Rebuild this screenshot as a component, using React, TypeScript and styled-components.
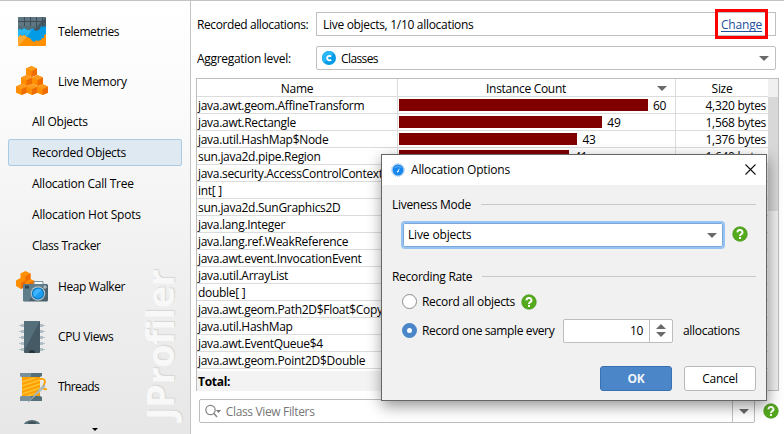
import React from "react";
import styled, { createGlobalStyle, css } from "styled-components";

const Global = createGlobalStyle`
  * { box-sizing: border-box; }
  html, body { margin: 0; padding: 0; background: #fff; }
  body { font-family: "Open Sans", "Noto Sans", sans-serif; font-size: 12px; line-height: 16px; color: #000; letter-spacing: -0.3px; overflow: hidden; }
`;

const Window = styled.div`
  position: relative;
  display: flex;
  width: 784px;
  height: 434px;
  border-top: 1px solid #c3c3c3;
  overflow: hidden;
  white-space: nowrap;
`;

const Label = styled.span<{ $w?: number; $ls?: number }>`
  flex: none;
  padding-top: 2px;
  ${(p) => p.$w && css`width: ${p.$w}px;`}
  ${(p) => p.$ls !== undefined && css`letter-spacing: ${p.$ls}px;`}
`;

/* ---------- sidebar ---------- */
const Sidebar = styled.nav`
  position: relative;
  flex: none;
  width: 191px;
  height: 433px;
  padding-top: 6px;
  border-right: 1px solid #c3c3c3;
  background: linear-gradient(#ffffff 0%, #fbfbfb 24%, #f0f0f0 62%, #e7e7e7 100%);
`;
const NavScroll = styled.div`
  height: 417px;
  overflow: hidden;
`;
const NavItem = styled.div`
  display: flex;
  align-items: center;
  height: 50px;
  padding-left: 16px;
  svg { flex: none; margin-right: 10px; }
  ${Label} { padding-top: 0; }
`;
const SubItem = styled.div<{ $selected?: boolean }>`
  display: flex;
  align-items: center;
  height: 27px;
  margin: 0 8px 4px;
  padding-left: 23px;
  border: 1px solid transparent;
  border-radius: 2px;
  ${Label} { padding-top: 1px; }
  ${(p) => p.$selected && css`background: #dfe9f2; border-color: #a9cbe3;`}
`;
const SubList = styled.div`
  padding-top: 1px;
  height: 155px;
`;
const MoreArrow = styled.div`
  position: absolute;
  left: 92px;
  top: 427px;
  border: 3px solid transparent;
  border-top-color: #000;
  border-bottom: 0;
`;
const Watermark = styled.div`
  position: absolute;
  left: 138px;
  top: 267px;
  height: 152px;
  writing-mode: vertical-rl;
  transform: rotate(180deg);
  font: bold 38px/42px "Open Sans", sans-serif;
  letter-spacing: -0.5px;
  color: #f8f8f8;
  text-shadow: 1px 1px 1px #d6d6d6;
`;

/* ---------- main pane ---------- */
const Main = styled.main`
  flex: 1;
  display: flex;
  flex-direction: column;
  padding: 11px 5px 0 5px;
  min-width: 0;
`;
const FormRow = styled.div`
  display: flex;
  align-items: center;
  height: 24px;
  margin-bottom: 10px;
  padding-left: 1px;
`;
const Field = styled.div<{ $round?: boolean }>`
  display: flex;
  align-items: center;
  width: 460px;
  height: 24px;
  padding: 0 ${(p) => (p.$round ? 6 : 13)}px 0 ${(p) => (p.$round ? 5 : 6)}px;
  border: 1px solid #c0c0c0;
  border-radius: ${(p) => (p.$round ? 2 : 0)}px;
  background: #fff;
  svg { margin-right: 5px; }
`;
const Push = styled.span`
  flex: 1;
`;
const Link = styled.a`
  color: #1d4f9c;
  padding-top: 2px;
  line-height: 13px;
  letter-spacing: -0.2px;
  border-bottom: 1px solid #1d4f9c;
`;
const Caret = styled.i<{ $up?: boolean; $size?: number; $h?: number }>`
  display: block;
  flex: none;
  border: ${(p) => p.$size ?? 5}px solid transparent;
  ${(p) => (p.$up
    ? css`border-top: 0; border-bottom: ${p.$h ?? 5}px solid #6a6a6a;`
    : css`border-bottom: 0; border-top: ${p.$h ?? 5}px solid #6a6a6a;`)}
`;
const Highlight = styled.div`
  position: absolute;
  left: 715px;
  top: 8px;
  width: 53px;
  height: 30px;
  border: 3px solid #f00;
`;

/* ---------- table ---------- */
const Table = styled.div`
  display: flex;
  width: 583px;
  height: 313px;
  margin-top: -2px;
  border: 1px solid #bdbdbd;
`;
const Rows = styled.div`
  width: 571px;
`;
const Row = styled.div<{ $head?: boolean }>`
  display: grid;
  grid-template-columns: 200px 278px 93px;
  height: ${(p) => (p.$head ? 18 : 17)}px;
  border-bottom: 1px solid #dcdcdc;
`;
const Cell = styled.div<{ $align?: string }>`
  display: flex;
  align-items: center;
  justify-content: ${(p) => p.$align ?? "flex-start"};
  padding: 1px ${(p) => (p.$align ? 2 : 0)}px 0 1px;
  line-height: 15px;
  overflow: hidden;
  & + & { border-left: 1px solid #dcdcdc; }
`;
const HeadCell = styled(Cell)<{ $sorted?: boolean }>`
  justify-content: center;
  position: relative;
  padding: 2px ${(p) => (p.$sorted ? 22 : 1)}px 0 1px;
`;
const SortMark = styled.span`
  position: absolute;
  right: 8px;
  top: 7px;
`;
const Bar = styled.div`
  height: 12px;
  margin: 0 5px 1px 0;
  background: #800000;
`;
const TotalRow = styled.div`
  margin-top: 2px;
  height: 20px;
  padding: 3px 1px;
  background: #f3f3f3;
  font-weight: bold;
`;
const ScrollTrack = styled.div`
  width: 10px;
  padding-top: 18px;
  background: #f0f0f0;
`;
const ScrollThumb = styled.div`
  height: 114px;
  background: #d8d8d8;
`;

/* ---------- filter ---------- */
const FilterRow = styled.div`
  display: flex;
  align-items: center;
  margin-top: 8px;
  padding-left: 3px;
`;
const FilterBox = styled.div`
  display: flex;
  align-items: center;
  width: 557px;
  height: 24px;
  margin-right: 8px;
  padding-left: 5px;
  border: 1px solid #bdbdbd;
  border-radius: 2px;
  color: #777;
`;
const SplitButton = styled.div<{ $w: number }>`
  display: flex;
  flex-direction: column;
  align-items: center;
  justify-content: center;
  gap: 3px;
  align-self: stretch;
  width: ${(p) => p.$w}px;
  border-left: 1px solid #c0c0c0;
`;

/* ---------- dialog ---------- */
const Dialog = styled.section`
  position: absolute;
  left: 381px;
  top: 153px;
  width: 386px;
  height: 247px;
  border: 1px solid #666;
  background: #f1f1f1;
  box-shadow: 1px 5px 14px rgba(0, 0, 0, 0.42);
  ${Label} { padding-top: 0; }
`;
const TitleBar = styled.header`
  display: flex;
  align-items: center;
  height: 30px;
  padding: 0 10px 0 9px;
  background: #fff;
  svg { margin: 0 6px 1px 0; }
  svg:last-child { margin-right: 0; }
`;
const Body = styled.div`
  padding: 11px 10px 0 10px;
`;
const GroupTitle = styled.div`
  display: flex;
  align-items: center;
  gap: 10px;
  height: 17px;
  &::after { content: ""; flex: 1; height: 1px; margin-bottom: 1px; background: #c8c8c8; }
`;
const ModeRow = styled.div`
  display: flex;
  align-items: center;
  gap: 7px;
  margin: 8px 0 19px 9px;
  svg { margin-bottom: 2px; }
`;
const Combo = styled.div`
  display: flex;
  align-items: center;
  width: 324px;
  height: 28px;
  padding: 0 6px 0 5px;
  border: 2px solid #97c3f3;
  border-radius: 4px;
  background: #fff;
  box-shadow: inset 0 0 0 1px #7ba8dc;
`;
const OptionRow = styled.div<{ $h: number }>`
  display: flex;
  align-items: center;
  height: ${(p) => p.$h}px;
  padding-left: 10px;
`;
const Radio = styled.span<{ $on?: boolean }>`
  flex: none;
  width: 15px;
  height: 15px;
  margin-right: 5px;
  border-radius: 50%;
  ${(p) => (p.$on
    ? css`border: 5px solid #4a86c8;`
    : css`border: 1px solid #8c8c8c;`)}
  background: #fff;
`;
const Spinner = styled.div`
  display: flex;
  align-items: center;
  justify-content: flex-end;
  width: 110px;
  height: 24px;
  margin-right: 10px;
  border: 1px solid #bdbdbd;
  border-radius: 2px;
  background: #fff;
`;
const Num = styled.span`
  margin-right: 6px;
`;
const Buttons = styled.div`
  display: flex;
  justify-content: flex-end;
  gap: 12px;
  margin-top: 23px;
`;
const Button = styled.button<{ $primary?: boolean }>`
  width: 72px;
  height: 25px;
  padding: 0;
  font: inherit;
  letter-spacing: inherit;
  border-radius: 3px;
  border: 1px solid #b8b8b8;
  background: #fff;
  color: #000;
  ${(p) => p.$primary && css`border-color: #3a71b3; background: #4a86c8; color: #f0f4fa; font-weight: bold;`}
`;

/* ---------- icons ---------- */
const Help = () => (
  <svg width="16" height="16" viewBox="0 0 16 16">
    <circle cx="8" cy="8" r="7.3" fill="#54a91c" stroke="#3f9211" strokeWidth=".6" />
    <path d="M5.500 6.400a2.500 2.200 0 1 1 3.700 1.700C8.400 8.600 8 8.900 8 9.900" fill="none" stroke="#fff" strokeWidth="1.900" />
    <rect x="7" y="10.900" width="2" height="2" fill="#fff" />
  </svg>
);

const TelemetryIcon = () => (
  <svg width="32" height="32" viewBox="0 0 32 32">
    <rect x="2" y="1" width="28" height="29" rx="1" fill="#ff9100" />
    <path d="M2 30 17 15 2 13z" fill="#ffab33" />
    <path d="M2 2q0-1 1-1h26q1 0 1 1v9H2z" fill="#455a64" />
    <path d="M2 2q0-1 1-1h27L20 11H2z" fill="#607781" />
    <path d="M8.500 1v10M14.500 1v10M20.500 1v10M26.500 1v10M2 5.500h28" stroke="#3c4e57" />
    <path d="M2 10h28v5l-4 4H4l-2-3z" fill="#455a64" />
    <path d="M2 10h19l-6 7H2z" fill="#546e7a" />
    <path d="M2 14l2-1 2 1 2-2 3 2 3 0 3-2 1 2 3 1 3-2 1-3 2 1 3-1v8l-2 1v3l-2 0-1 2-3 1-2-1-1 2-3-1-2-3-3-1-3-3-2 2-2-2-2 3z" fill="#039be5" />
    <path d="M2 14l2-1 2 1 2-2 3 2 3 0 3-2-6 9-2-3-2 2-2-2-3 3z" fill="#29b6f6" />
  </svg>
);

const Cube = ({ x, y }: { x: number; y: number }) => (
  <g transform={`translate(${x} ${y})`}>
    <path d="M5.500 0 11 2.600v6.100L5.500 11 0 8.700V2.600z" fill="#ff8f00" />
    <path d="M5.500 4.900 11 2.600v6.100L5.500 11z" fill="#ef6c00" />
    <path d="M0 2.600 5.500 0 11 2.600 5.500 4.900z" fill="#ff9a1c" />
  </g>
);

const CubesIcon = () => (
  <svg width="32" height="32" viewBox="0 0 32 32">
    <Cube x={10} y={0} />
    <Cube x={5} y={9} /><Cube x={16} y={9} />
    <Cube x={0} y={18} /><Cube x={10.5} y={18} /><Cube x={21} y={18} />
  </svg>
);

const HeapIcon = () => (
  <svg width="32" height="32" viewBox="0 0 32 32">
    <path d="m9.500 0 5 2.500v5.500l4 2v5H10l-5 3-5-3v-5.500l4.500-2.500V2.500z" fill="#ff8f00" />
    <path d="m9.500 5 5-2.500v5.500L9.500 11zM5 12l4.500-2.500v6L5 18zM13 11.500l5.500-2v4H13z" fill="#ef6c00" />
    <path d="M18 14v-3.500h9V14" fill="#f5f7f8" stroke="#78909c" />
    <rect x="7" y="13" width="25" height="17.500" rx="1.500" fill="#4b626d" />
    <path d="M7 15q0-2 2-2h20L12 30H7z" fill="#607d8b" />
    <rect x="9" y="14.500" width="4" height="3" fill="#37474f" />
    <path d="M27 16h4M29 14v4" stroke="#cfd8dc" />
    <circle cx="22" cy="22.500" r="7.300" fill="#b0bec5" />
    <circle cx="22" cy="22.500" r="6.100" fill="#0277bd" />
    <circle cx="22" cy="22.500" r="5" fill="#1e9cf0" />
    <path d="M18.500 26A5 5 0 0 1 25.500 19z" fill="#40b4ff" />
  </svg>
);

const CpuIcon = () => (
  <svg width="32" height="32" viewBox="0 0 32 32">
    {[3, 9, 15, 21, 27].map((y) => (
      <path key={y} d={`M3 ${y + 1}h2v-1h3v3h-3v-1h-2zM29 ${y + 1}h-2v-1h-3v3h3v-1h2z`} fill="#b0bec5" />
    ))}
    <rect x="8" y="0" width="16" height="32" rx="1" fill="#455a64" />
    <path d="M9 0h15L8 30V1q0-1 1-1z" fill="#546e7a" />
    <path d="M13 32a3 3 0 0 1 6 0z" fill="#263238" />
  </svg>
);

const ThreadsIcon = () => (
  <svg width="32" height="32" viewBox="0 0 32 32">
    <rect x="6" y="5" width="18" height="21" fill="#ffa000" />
    <path d="M6 11 19 7M6 15 24 9M6 19 24 13M6 23 24 17M8 26 24 21" stroke="#ffc233" strokeWidth="1.500" />
    <path d="M4 2h22v3l-2 1H6L4 5zM4 26l2-1h18l2 1v4H4z" fill="#546e7a" />
    <path d="M4 2h11v4H6L4 5zM4 26l2-1h9v5H4z" fill="#78909c" />
    <path d="M24 8q5-1 5 3l-2 5q0 3 4 2" fill="none" stroke="#ffa000" strokeWidth="1.800" />
    <path d="m12.500 31 10-12 5-5q2 0 1 2l-5 5z" fill="#b0bec5" stroke="#8d9da5" strokeWidth=".5" />
  </svg>
);

const PartialIcon = () => (
  <svg width="32" height="32" viewBox="0 0 32 32" overflow="visible">
    <ellipse cx="16" cy="5" rx="8.500" ry="6" fill="#546e7a" />
    <ellipse cx="16" cy="1.800" rx="4" ry="1.200" fill="#40535d" />
  </svg>
);

const ClassIcon = () => (
  <svg width="14" height="14" viewBox="0 0 14 14">
    <circle cx="7" cy="7" r="7" fill="#039be5" />
    <path d="M2 12A7 7 0 0 1 12 2z" fill="#29b6f6" />
    <path d="M9.200 5.600A2.300 2.300 0 1 0 9.200 8.600" fill="none" stroke="#fff" strokeWidth="1.800" />
  </svg>
);

const AppIcon = () => (
  <svg width="14" height="14" viewBox="0 0 14 14">
    <circle cx="7" cy="7" r="6.500" fill="#c9dff3" stroke="#a9c4dd" strokeDasharray="1 1" />
    <circle cx="7" cy="7" r="5.500" fill="#1687f0" />
    <path d="M3.500 4.500Q7 2.500 10.500 4.500" fill="none" stroke="#5fb0f8" />
    <path d="m8.600 5-.8 3.800-1.600 1-.4-1.300 1-1z" fill="#e3f1ff" />
  </svg>
);

const SearchIcon = () => (
  <svg width="18" height="16" viewBox="0 0 18 16">
    <circle cx="5.500" cy="7" r="4.700" fill="none" stroke="#858585" strokeWidth="1.200" />
    <path d="m9 10.500 3 3.500" stroke="#858585" strokeWidth="1.500" />
    <path d="M11 7h5l-2.500 3z" fill="#777" />
  </svg>
);

const CloseIcon = () => (
  <svg width="11" height="11" viewBox="0 0 11 11">
    <path d="m.5.5 10 10M10.500.5l-10 10" stroke="#111" strokeWidth="1.100" />
  </svg>
);

const data: [string, number?, string?][] = [
  ["java.awt.geom.AffineTransform", 60, "4,320 bytes"],
  ["java.awt.Rectangle", 49, "1,568 bytes"],
  ["java.util.HashMap$Node", 43, "1,376 bytes"],
  ["sun.java2d.pipe.Region", 41, "1,640 bytes"],
  ["java.security.AccessControlContext"],
  ["int[ ]"],
  ["sun.java2d.SunGraphics2D"],
  ["java.lang.Integer"],
  ["java.lang.ref.WeakReference"],
  ["java.awt.event.InvocationEvent"],
  ["java.util.ArrayList"],
  ["double[ ]"],
  ["java.awt.geom.Path2D$Float$Copy"],
  ["java.util.HashMap"],
  ["java.awt.EventQueue$4"],
  ["java.awt.geom.Point2D$Double"],
];

export default function App() {
  return (
    <>
      <Global />
      <Window>
        <Sidebar>
          <Watermark>JProfiler</Watermark>
          <NavScroll>
            <NavItem><TelemetryIcon /><Label $ls={-0.42}>Telemetries</Label></NavItem>
            <NavItem><CubesIcon /><Label>Live Memory</Label></NavItem>
            <SubList>
              <SubItem><Label>All Objects</Label></SubItem>
              <SubItem $selected><Label>Recorded Objects</Label></SubItem>
              <SubItem><Label $ls={-0.25}>Allocation Call Tree</Label></SubItem>
              <SubItem><Label $ls={-0.2}>Allocation Hot Spots</Label></SubItem>
              <SubItem><Label $ls={-0.4}>Class Tracker</Label></SubItem>
            </SubList>
            <NavItem><HeapIcon /><Label $ls={-0.4}>Heap Walker</Label></NavItem>
            <NavItem><CpuIcon /><Label $ls={-0.35}>CPU Views</Label></NavItem>
            <NavItem><ThreadsIcon /><Label $ls={-0.6}>Threads</Label></NavItem>
            <NavItem><PartialIcon /></NavItem>
          </NavScroll>
          <MoreArrow />
        </Sidebar>

        <Main>
          <FormRow>
            <Label $w={119} $ls={-0.4}>Recorded allocations:</Label>
            <Field><Label>Live objects, 1/10 allocations</Label><Push /><Link>Change</Link></Field>
          </FormRow>
          <FormRow>
            <Label $w={119} $ls={-0.3}>Aggregation level:</Label>
            <Field $round><ClassIcon /><Label $ls={-0.6}>Classes</Label><Push /><Caret /></Field>
          </FormRow>

          <Table>
            <Rows>
              <Row $head>
                <HeadCell>Name</HeadCell>
                <HeadCell $sorted>Instance Count<SortMark><Caret /></SortMark></HeadCell>
                <HeadCell>Size</HeadCell>
              </Row>
              {data.map(([name, count, size]) => (
                <Row key={name}>
                  <Cell>{name}</Cell>
                  <Cell>{count && <><Bar style={{ width: count * 4.15 }} />{count}</>}</Cell>
                  <Cell $align="flex-end">{size}</Cell>
                </Row>
              ))}
              <TotalRow>Total:</TotalRow>
            </Rows>
            <ScrollTrack><ScrollThumb /></ScrollTrack>
          </Table>

          <FilterRow>
            <FilterBox>
              <SearchIcon /><Label $ls={-0.35}>&nbsp;Class View Filters</Label><Push />
              <SplitButton $w={22}><Caret /></SplitButton>
            </FilterBox>
            <Help />
          </FilterRow>
        </Main>

        <Highlight />

        <Dialog>
          <TitleBar><AppIcon /><Label $ls={-0.2}>Allocation Options</Label><Push /><CloseIcon /></TitleBar>
          <Body>
            <GroupTitle><Label>Liveness Mode</Label></GroupTitle>
            <ModeRow><Combo><Label $ls={-0.15}>Live objects</Label><Push /><Caret /></Combo><Help /></ModeRow>
            <GroupTitle><Label>Recording Rate</Label></GroupTitle>
            <OptionRow $h={33}><Radio /><Label $w={99} $ls={-0.3}>Record all objects</Label><Help /></OptionRow>
            <OptionRow $h={25}>
              <Radio $on /><Label $w={141} $ls={-0.38}>Record one sample every</Label>
              <Spinner><Num>10</Num><SplitButton $w={23}><Caret $up /><Caret /></SplitButton></Spinner>
              <Label>allocations</Label>
            </OptionRow>
            <Buttons><Button $primary>OK</Button><Button>Cancel</Button></Buttons>
          </Body>
        </Dialog>
      </Window>
    </>
  );
}
